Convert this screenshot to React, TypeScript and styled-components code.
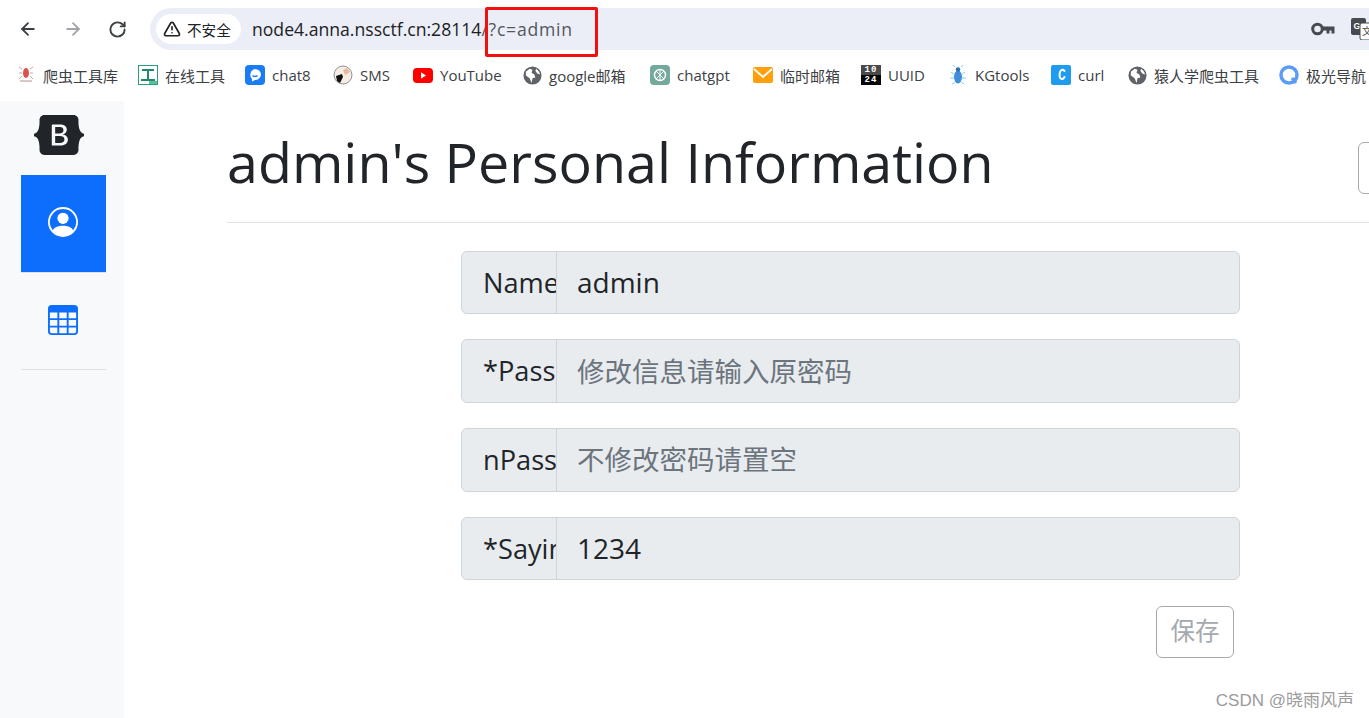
import React from "react";
import styled, { createGlobalStyle } from "styled-components";
import { ArrowLeft, ArrowRight, RotateCw, TriangleAlert } from "lucide-react";

const UI = `"Open Sans", "Noto Sans CJK SC", sans-serif`;

const Global = createGlobalStyle`
  html, body { margin: 0; padding: 0; background: #fff; }
  * { box-sizing: border-box; }
`;

const Page = styled.div`
  position: relative;
  width: 1369px;
  height: 718px;
  overflow: hidden;
  background: #fff;
  display: flex;
  flex-direction: column;
  font-family: ${UI};
  color: #212529;
`;

const Toolbar = styled.div`
  height: 58px;
  padding: 8px 0 0 18px;
  display: flex;
  align-items: flex-start;
`;

const NavButtons = styled.div`
  display: flex;
  gap: 25px;
  height: 42px;
  align-items: center;
  width: 132px;
`;

const NavButton = styled.span<{ $dim?: boolean }>`
  display: flex;
  color: ${(p) => (p.$dim ? "#a3a5a8" : "#3c4043")};
`;

const AddressBar = styled.div`
  flex: 1;
  height: 42px;
  background: #ebeef7;
  border-radius: 21px 0 0 21px;
  display: flex;
  align-items: center;
  padding-left: 6px;
`;

const SecurityChip = styled.div`
  width: 85px;
  height: 30px;
  border-radius: 15px;
  background: #fff;
  display: flex;
  align-items: center;
  gap: 6px;
  padding-left: 7px;
  font-size: 14.6px;
  color: #202124;
  font-family: "Noto Sans CJK SC", sans-serif;
`;

const Url = styled.div`
  margin-left: 11px;
  font-size: 17.6px;
  color: #202124;
  white-space: nowrap;
`;

const UrlPath = styled.span`
  color: #54575c;
  letter-spacing: 0.75px;
`;

const AddressActions = styled.div`
  margin-left: auto;
  display: flex;
  align-items: center;
  gap: 16px;
  margin-right: -6px;
  color: #474a4e;
`;

const Bookmarks = styled.div`
  height: 43px;
  padding: 0 0 9px 16px;
  display: flex;
  align-items: center;
  white-space: nowrap;
`;

const Bookmark = styled.div<{ $width: number }>`
  flex: none;
  width: ${(p) => p.$width}px;
  display: flex;
  align-items: center;
  gap: 7px;
  font-size: 15px;
  color: #3c4043;
  font-family: "Open Sans", "Noto Sans CJK SC", sans-serif;
`;

const BmIcon = styled.span`
  flex: none;
  width: 20px;
  height: 20px;
  display: flex;
  align-items: center;
  justify-content: center;
`;

const TenTwentyFour = styled.span`
  width: 20px;
  height: 20px;
  display: flex;
  flex-direction: column;
  color: #fff;
  font: 700 9px/10px "Liberation Mono", monospace;
  text-align: center;
  letter-spacing: 1px;
`;

const CounterLine = styled.span<{ $dark?: boolean }>`
  height: 10px;
  background: ${(p) => (p.$dark ? "#050505" : "#4a4a4a")};
`;

const Body = styled.div`
  flex: 1;
  display: flex;
  min-height: 0;
`;

const Sidebar = styled.aside`
  flex: none;
  width: 124px;
  background: #f8f9fa;
  padding: 14px 18px 0 21px;
`;

const Brand = styled.div`
  height: 60px;
  padding-left: 13px;
  display: flex;
  align-items: flex-start;
`;

const SideNav = styled.nav`
  border-bottom: 1px solid #dee2e6;
`;

const SideItem = styled.div<{ $active?: boolean }>`
  height: ${(p) => (p.$active ? 98 : 96)}px;
  display: flex;
  align-items: center;
  justify-content: center;
  background: ${(p) => (p.$active ? "#0d6efd" : "transparent")};
  background-clip: padding-box;
  color: ${(p) => (p.$active ? "#fff" : "#0d6efd")};
  border-bottom: 1px solid ${(p) => (p.$active ? "#dee2e6" : "transparent")};
  padding: 0 2px ${(p) => (p.$active ? 3 : 1)}px 0;
`;

const Main = styled.main`
  flex: none;
  width: 1245px;
  padding-left: 103px;
`;

const Header = styled.header`
  width: 1222px;
  height: 122px;
  border-bottom: 1px solid #dee2e6;
  display: flex;
  align-items: flex-start;
  justify-content: space-between;
`;

const Title = styled.h1`
  margin: 20px 0 0 0;
  font-size: 55.6px;
  line-height: 82px;
  font-weight: 400;
  color: #212529;
  white-space: nowrap;
`;

const HeaderButton = styled.div`
  margin: 41px 0 0 0;
  width: 91px;
  height: 52px;
  border: 1px solid #a5a9ad;
  border-radius: 6px;
  flex: none;
`;

const Form = styled.form`
  margin: 27.6px 0 0 234px;
  width: 779px;
  display: flex;
  flex-direction: column;
  gap: 25px;
`;

const Group = styled.div`
  height: 63.67px;
  display: flex;
  background: #e9ecef;
  border: 1px solid #ced4da;
  border-radius: 6px;
  overflow: hidden;
`;

const GroupLabel = styled.span`
  flex: none;
  width: 95px;
  padding-left: 21px;
  border-right: 1px solid #ced4da;
  font-size: 27.2px;
  line-height: 62px;
  white-space: nowrap;
  overflow: hidden;
`;

const GroupInput = styled.input`
  flex: 1;
  min-width: 0;
  border: 0;
  outline: 0;
  background: transparent;
  padding: 0 0 1px 20px;
  font-family: "Open Sans", "Noto Sans CJK SC", sans-serif;
  font-size: 28px;
  color: #212529;
  &::placeholder { color: #6c757d; opacity: 1; font-size: 27.5px; }
`;

const Actions = styled.div`
  margin-top: 0.5px;
  display: flex;
  justify-content: flex-end;
  padding-right: 6px;
`;

const SaveButton = styled.button`
  width: 78px;
  height: 52px;
  background: #fff;
  border: 1px solid #a5a9ad;
  border-radius: 6px;
  color: #a5a9ad;
  font-family: "Noto Sans CJK SC", sans-serif;
  font-size: 24.5px;
  padding: 0 0 4px;
`;

const Highlight = styled.div`
  position: absolute;
  left: 485px;
  top: 7px;
  width: 113px;
  height: 50px;
  border: 3px solid #f10f0f;
  border-radius: 2px;
  pointer-events: none;
`;

const Watermark = styled.div`
  position: absolute;
  right: 15px;
  bottom: 7px;
  font-family: "Liberation Sans", "Noto Sans CJK SC", sans-serif;
  font-size: 17px;
  color: #9b9b9b;
`;

const Globe = () => (
  <svg width="19" height="19" viewBox="0 0 20 20">
    <circle cx="10" cy="10" r="9.5" fill="#5f6368" />
    <path d="M3 6l4-3 3 1-1 3 3 2 1 3-3 1-1 5-2-5-4-3zM14 3l3 3 1 3-3-1-2-3z" fill="#fff" />
  </svg>
);

const items: { w: number; label: string; icon: React.ReactNode }[] = [
  {
    w: 122,
    label: "爬虫工具库",
    icon: (
      <svg width="16" height="18" viewBox="0 0 16 18">
        <ellipse cx="8" cy="7" rx="3" ry="5" fill="#d9534f" />
        <path d="M4 3L1 1M4 7H1M4 10l-3 3M12 3l3-2M12 7h3M12 10l3 3" stroke="#c9a6a6" fill="none" />
        <rect x="2" y="14" width="12" height="2" fill="#d8c8c8" />
      </svg>
    ),
  },
  {
    w: 107,
    label: "在线工具",
    icon: (
      <svg width="20" height="20" viewBox="0 0 20 20">
        <rect x=".5" y=".5" width="19" height="19" fill="#fff" stroke="#2a9d7c" />
        <path d="M4 4h12v2h-5v8H9V6H4z" fill="#1f8a6a" />
        <rect x="3" y="14" width="14" height="2" fill="#1f8a6a" />
        <rect x="11" y="16" width="8" height="3" fill="#5cbf9d" />
      </svg>
    ),
  },
  {
    w: 88,
    label: "chat8",
    icon: (
      <svg width="20" height="20" viewBox="0 0 20 20">
        <rect width="20" height="20" rx="4" fill="#1a7cf7" />
        <path d="M10 4a6 6 0 0 1 6 5.600a6 6 0 0 1-6 5.400l-3 1.500v-2.500A6 6 0 0 1 10 4z" fill="#fff" />
        <path d="M7.500 10.500c1.500 1.200 3.500 1.200 5 0" stroke="#1a7cf7" strokeWidth="1.400" fill="none" />
      </svg>
    ),
  },
  {
    w: 80,
    label: "SMS",
    icon: (
      <svg width="20" height="20" viewBox="0 0 20 20">
        <circle cx="10" cy="10" r="9" fill="#f6eee6" stroke="#777" strokeWidth=".8" />
        <path d="M10 5l4-2 3 4-5 3z" fill="#e6b9a0" />
        <path d="M3 11l6-2 1 3-3 6-3-2z" fill="#111" />
      </svg>
    ),
  },
  {
    w: 109,
    label: "YouTube",
    icon: (
      <svg width="20" height="15" viewBox="0 0 20 15">
        <rect width="20" height="15" rx="4" fill="#f00" />
        <path d="M8 4.300l5 3.200-5 3.200z" fill="#fff" />
      </svg>
    ),
  },
  { w: 128, label: "google邮箱", icon: <Globe /> },
  {
    w: 103,
    label: "chatgpt",
    icon: (
      <svg width="20" height="20" viewBox="0 0 20 20">
        <rect width="20" height="20" rx="4" fill="#74aa9c" />
        <circle cx="10" cy="10" r="5.500" fill="none" stroke="#fff" strokeWidth="1.400" />
        <path d="M6 6l8 8M14 6l-8 8M10 4v12" stroke="#fff" strokeWidth="1" />
      </svg>
    ),
  },
  {
    w: 108,
    label: "临时邮箱",
    icon: (
      <svg width="20" height="16" viewBox="0 0 20 16">
        <rect width="20" height="16" rx="2" fill="#ff9f0a" />
        <path d="M1 2l9 8 9-8" fill="none" stroke="#fff" strokeWidth="1.800" />
      </svg>
    ),
  },
  {
    w: 87,
    label: "UUID",
    icon: (
      <TenTwentyFour>
        <CounterLine>10</CounterLine>
        <CounterLine $dark>24</CounterLine>
      </TenTwentyFour>
    ),
  },
  {
    w: 103,
    label: "KGtools",
    icon: (
      <svg width="18" height="20" viewBox="0 0 18 20">
        <ellipse cx="9" cy="12" rx="4" ry="6.500" fill="#3f8fd8" />
        <circle cx="9" cy="4.500" r="2.200" fill="#2c6fb5" />
        <path d="M6 2L4 0M12 2l2-2M5 9L2 7M13 9l3-2M5 13H1M13 13h4M6 17l-3 2M12 17l3 2" stroke="#7fd0ee" fill="none" />
      </svg>
    ),
  },
  {
    w: 76,
    label: "curl",
    icon: (
      <svg width="20" height="20" viewBox="0 0 20 20">
        <rect width="20" height="20" rx="2" fill="#1f9bf0" />
        <path d="M13.500 6c-1-2-3.500-1.500-4.500 1-1 3-.5 7 2 7 1 0 2-.8 2.500-2" fill="none" stroke="#fff" strokeWidth="2" strokeLinecap="round" />
      </svg>
    ),
  },
  { w: 152, label: "猿人学爬虫工具", icon: <Globe /> },
  {
    w: 100,
    label: "极光导航",
    icon: (
      <svg width="20" height="20" viewBox="0 0 20 20">
        <circle cx="10" cy="10" r="8" fill="none" stroke="#5b9df5" strokeWidth="3.500" />
        <path d="M13 13l4 5" stroke="#5b9df5" strokeWidth="3" />
      </svg>
    ),
  },
];

const fields = [
  { label: "Name", value: "admin" },
  { label: "*Pass", placeholder: "修改信息请输入原密码" },
  { label: "nPass", placeholder: "不修改密码请置空" },
  { label: "*Saying", value: "1234" },
];

export default function App() {
  return (
    <Page>
      <Global />
      <Toolbar>
        <NavButtons>
          <NavButton><ArrowLeft size={20} strokeWidth={2.2} /></NavButton>
          <NavButton $dim><ArrowRight size={20} strokeWidth={2.2} /></NavButton>
          <NavButton><RotateCw size={19} strokeWidth={2.4} /></NavButton>
        </NavButtons>
        <AddressBar>
          <SecurityChip>
            <TriangleAlert size={18} strokeWidth={2.2} />
            不安全
          </SecurityChip>
          <Url>node4.anna.nssctf.cn:28114<UrlPath>/?c=admin</UrlPath></Url>
          <AddressActions>
            <svg width="24" height="14" viewBox="0 0 24 14">
              <circle cx="6.500" cy="7" r="4.800" fill="none" stroke="currentColor" strokeWidth="3" />
              <path d="M11 4.500h12.500v7h-3v-3h-2v3h-3v-3H11z" fill="currentColor" />
            </svg>
            <svg width="24" height="22" viewBox="0 0 24 22">
              <rect x="0" y="0" width="15" height="17" rx="2" fill="currentColor" />
              <text x="2.500" y="11" fontSize="9" fontWeight="700" fill="#fff" fontFamily="Liberation Sans, sans-serif">G</text>
              <rect x="9" y="5" width="15" height="17" rx="2" fill="#fff" stroke="currentColor" />
              <text x="11" y="17" fontSize="10" fill="currentColor" fontFamily="Noto Sans CJK SC, sans-serif">文</text>
            </svg>
          </AddressActions>
        </AddressBar>
      </Toolbar>
      <Bookmarks>
        {items.map((b) => (
          <Bookmark key={b.label} $width={b.w}>
            <BmIcon>{b.icon}</BmIcon>
            {b.label}
          </Bookmark>
        ))}
      </Bookmarks>
      <Body>
        <Sidebar>
          <Brand>
            <svg width="50" height="40" viewBox="0 0 118 94" fill="#212529">
              <path
                fillRule="evenodd"
                clipRule="evenodd"
                d="M24.509 0c-6.733 0-11.715 5.893-11.492 12.284.214 6.14-.064 14.092-2.066 20.577C8.943 39.365 5.547 43.485 0 44.014v5.972c5.547.529 8.943 4.649 10.951 11.153 2.002 6.485 2.28 14.437 2.066 20.577C12.794 88.106 17.776 94 24.51 94H93.5c6.733 0 11.714-5.893 11.491-12.284-.214-6.14.064-14.092 2.066-20.577 2.009-6.504 5.396-10.624 10.943-11.153v-5.972c-5.547-.529-8.934-4.649-10.943-11.153-2.002-6.484-2.28-14.437-2.066-20.577C105.214 5.894 100.233 0 93.5 0H24.508zM80 57.863C80 66.663 73.436 72 62.543 72H44a2 2 0 01-2-2V24a2 2 0 012-2h18.437c9.083 0 15.044 4.92 15.044 12.474 0 5.302-4.01 10.049-9.119 10.88v.277C75.317 46.394 80 51.21 80 57.863zM60.521 28.34H49.948v14.934h8.905c6.884 0 10.68-2.772 10.68-7.727 0-4.643-3.264-7.207-8.012-7.207zM49.948 49.2v16.458H60.91c7.167 0 10.964-2.876 10.964-8.281 0-5.406-3.903-8.178-11.425-8.178H49.948z"
              />
            </svg>
          </Brand>
          <SideNav>
            <SideItem $active>
              <svg width="30" height="30" viewBox="0 0 16 16" fill="currentColor">
                <path d="M11 6a3 3 0 1 1-6 0 3 3 0 0 1 6 0z" />
                <path fillRule="evenodd" d="M0 8a8 8 0 1 1 16 0A8 8 0 0 1 0 8zm8-7a7 7 0 0 0-5.468 11.37C3.242 11.226 4.805 10 8 10s4.757 1.225 5.468 2.37A7 7 0 0 0 8 1z" />
              </svg>
            </SideItem>
            <SideItem>
              <svg width="30" height="30" viewBox="0 0 16 16" fill="currentColor">
                <path d="M0 2a2 2 0 0 1 2-2h12a2 2 0 0 1 2 2v12a2 2 0 0 1-2 2H2a2 2 0 0 1-2-2V2zm15 2h-4v3h4V4zm0 4h-4v3h4V8zm0 4h-4v3h3a1 1 0 0 0 1-1v-2zm-5 3v-3H6v3h4zm-5 0v-3H1v2a1 1 0 0 0 1 1h3zm-4-4h4V8H1v3zm0-4h4V4H1v3zm5-3v3h4V4H6zm4 4H6v3h4V8z" />
              </svg>
            </SideItem>
          </SideNav>
        </Sidebar>
        <Main>
          <Header>
            <Title>admin's Personal Information</Title>
            <HeaderButton />
          </Header>
          <Form onSubmit={(e) => e.preventDefault()}>
            {fields.map((f) => (
              <Group key={f.label}>
                <GroupLabel>{f.label}</GroupLabel>
                <GroupInput readOnly value={f.value} placeholder={f.placeholder} />
              </Group>
            ))}
            <Actions>
              <SaveButton type="button">保存</SaveButton>
            </Actions>
          </Form>
        </Main>
      </Body>
      <Highlight />
      <Watermark>CSDN @晓雨风声</Watermark>
    </Page>
  );
}
